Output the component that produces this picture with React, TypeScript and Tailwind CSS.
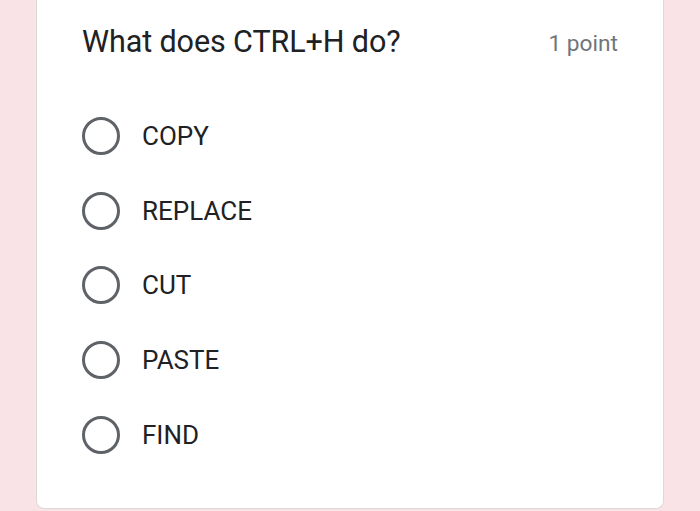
const options = ["COPY", "REPLACE", "CUT", "PASTE", "FIND"];

export default function App() {
  return (
    <div className="h-[511px] w-[700px] overflow-hidden bg-[#f9e3e6] font-['Roboto',sans-serif]">
      <div className="mx-[36px] h-[509px] rounded-b-lg border-x border-b border-[#dcd8d9] bg-white">
        <div className="flex items-start justify-between pl-[45px] pr-[45px] pt-[23px]">
          <h1 className="text-[30.5px] leading-[38px] tracking-[-0.1px] text-[#202124]">
            What does CTRL+H do?
          </h1>
          <span className="pt-[7px] text-[22.7px] leading-[28px] text-[#70757a]">1 point</span>
        </div>
        <ul className="mt-[56px] flex flex-col gap-[36.7px] pl-[45px]">
          {options.map((o) => (
            <li key={o} className="flex h-[38px] items-center gap-[22px]">
              <span className="block h-[38px] w-[38px] rounded-full border-[3.5px] border-[#5f6368]" />
              <span className="text-[26px] leading-[30px] text-[#202124]">{o}</span>
            </li>
          ))}
        </ul>
      </div>
    </div>
  );
}
